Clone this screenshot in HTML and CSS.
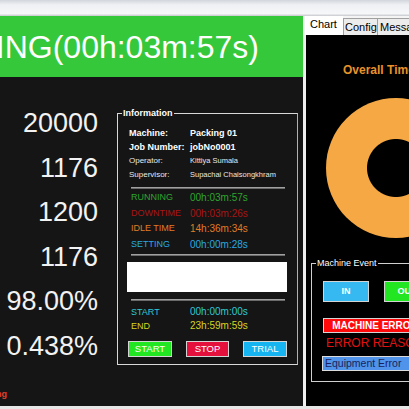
FILE: index.html
```html
<!DOCTYPE html>
<html>
<head>
<meta charset="utf-8">
<link rel="stylesheet" href="styles.css">
</head>
<body>
<div class="app">
  <div class="topstrip"></div>
  <div class="main">
    <div class="left">
      <div class="banner"><span class="banner-text">RUNNING(00h:03m:57s)</span></div>
      <div class="dash">
        <div class="numbers">
          <div class="num">20000</div>
          <div class="num">1176</div>
          <div class="num">1200</div>
          <div class="num">1176</div>
          <div class="num">98.00%</div>
          <div class="num">0.438%</div>
          <div class="warn"><span>Warning</span></div>
        </div>
        <fieldset class="info">
          <legend>Information</legend>
          <div class="details">
            <div class="lbl b">Machine:</div><div class="val b">Packing 01</div>
            <div class="lbl b">Job Number:</div><div class="val b">jobNo0001</div>
            <div class="lbl s">Operator:</div><div class="val xs">Kittiya Sumala</div>
            <div class="lbl s">Supervisor:</div><div class="val xs">Supachai Chaisongkhram</div>
          </div>
          <div class="sep sep1"></div>
          <div class="status">
            <div class="st run">RUNNING</div><div class="sv run">00h:03m:57s</div>
            <div class="st down">DOWNTIME</div><div class="sv down">00h:03m:26s</div>
            <div class="st idle">IDLE TIME</div><div class="sv idle">14h:36m:34s</div>
            <div class="st set">SETTING</div><div class="sv set">00h:00m:28s</div>
          </div>
          <div class="sep sep2"></div>
          <div class="whitebox"></div>
          <div class="sep sep3"></div>
          <div class="shift">
            <div class="st cyan">START</div><div class="sv cyan">00h:00m:00s</div>
            <div class="st yellow">END</div><div class="sv yellow">23h:59m:59s</div>
          </div>
          <div class="actions">
            <div class="abtn start">START</div>
            <div class="abtn stop">STOP</div>
            <div class="abtn trial">TRIAL</div>
          </div>
        </fieldset>
      </div>
    </div>
    <div class="right">
      <div class="tabs">
        <div class="tab active">Chart</div>
        <div class="tab config">Config</div>
        <div class="tab mess">Message</div>
      </div>
      <div class="tabbody">
        <div class="chart-title">Overall Time</div>
        <div class="donut"></div>
        <fieldset class="event">
          <legend>Machine Event</legend>
          <div class="event-row">
            <div class="ebtn in">IN</div>
            <div class="ebtn out">OUT</div>
          </div>
          <div class="ebtn merr">MACHINE ERROR</div>
          <div class="reason">ERROR REASON</div>
          <div class="combo">Equipment Error</div>
        </fieldset>
      </div>
    </div>
  </div>
  <div class="bottomstrip"></div>
</div>
</body>
</html>
```

FILE: styles.css
```css
* { box-sizing: border-box; }
html, body { margin: 0; padding: 0; }
body { font-family: "Liberation Sans", Arial, sans-serif; background: #151515; }
.app { width: 409px; height: 409px; overflow: hidden; display: flex; flex-direction: column; }
.topstrip { height: 16px; flex-shrink: 0; background: linear-gradient(#d2d6dc, #eef0f3 30%, #f6f7f9 85%, #c4c8ce); }
.main { height: 390px; display: flex; flex-shrink: 0; }
.bottomstrip { height: 3px; background: #e6e6e6; flex-shrink: 0; }

.left { width: 303px; display: flex; flex-direction: column; flex-shrink: 0; }
.banner { height: 61px; background: #35c83a; display: flex; align-items: center; justify-content: flex-end; overflow: hidden; padding-right: 44px; flex-shrink: 0; }
.banner-text { color: #fff; font-size: 32px; white-space: nowrap; flex-shrink: 0; line-height: 1; }
.dash { flex: 1; background: #151515; display: flex; }

.numbers { width: 98px; display: flex; flex-direction: column; padding-top: 24px; flex-shrink: 0; }
.num { height: 44.6px; line-height: 44.6px; font-size: 27px; color: #f2f2f2; text-align: right; white-space: nowrap; }
.warn { margin-top: auto; margin-bottom: 7px; width: 7px; overflow: hidden; display: flex; justify-content: flex-end; }
.warn span { color: #e0402a; font-size: 9px; font-weight: bold; flex-shrink: 0; }

.info { margin: 31px 0 0 19px; width: 181px; height: 257px; padding: 0; border: 1px solid #d8d8d8; border-right-color: #b0b0b0; min-width: 0; }
.info legend { color: #fff; font-size: 9px; font-weight: bold; padding: 0 1px; margin-left: 4px; line-height: 10px; }
.details { display: grid; grid-template-columns: 61px 1fr; margin: 8px 0 0 11px; color: #fff; }
.lbl, .val { height: 14px; line-height: 14px; white-space: nowrap; }
.b { font-size: 9px; font-weight: bold; }
.s { font-size: 8px; color: #e8e8e8; }
.xs { font-size: 7.5px; color: #e8e8e8; }
.sep { height: 2px; background: #a0a0a0; border-bottom: 1px solid #6a6a6a; }
.sep1 { margin: 5px 0 1px 13px; width: 154px; }
.status { display: grid; grid-template-columns: 61px 1fr; margin-left: 13px; }
.st, .sv { height: 15.5px; line-height: 15.5px; white-space: nowrap; }
.st { font-size: 9px; }
.sv { font-size: 10px; margin-left: -2px; }
.run { color: #2ea52e; }
.down { color: #a81616; }
.idle { color: #e07c26; }
.set { color: #28a8e2; }
.cyan { color: #2ec8d6; }
.yellow { color: #d8d420; }
.sep2 { margin: 2px 0 0 13px; width: 154px; }
.whitebox { margin: 6px 0 0 9px; width: 160px; height: 30px; background: #fff; }
.sep3 { margin: 7px 0 0 13px; width: 154px; }
.shift { display: grid; grid-template-columns: 61px 1fr; margin: 4px 0 0 13px; }
.shift .st, .shift .sv { height: 14px; line-height: 14px; }
.actions { display: flex; gap: 14px; margin: 8px 0 0 10px; }
.abtn { width: 44px; height: 16px; line-height: 14px; border: 1px solid #d4d4d4; color: #fff; font-size: 9.5px; text-align: center; }
.abtn.stop { width: 43px; }
.start { background: #22e622; }
.stop { background: #e6103c; }
.trial { background: #16b4f0; }

.right { width: 106px; display: flex; flex-direction: column; overflow: hidden; flex-shrink: 0; }
.tabs { height: 19px; display: flex; background: #f4f4f4; flex-shrink: 0; }
.tab { font-size: 11px; color: #000; white-space: nowrap; line-height: 16px; flex-shrink: 0; overflow: hidden; }
.tab.active { width: 40px; background: #fff; padding-left: 5px; line-height: 17px; border-left: 2px solid #f0f0f0; }
.tab.config { width: 35px; margin-top: 2px; height: 17px; background: #ececec; border: 1px solid #a0a0a0; border-bottom: none; padding-left: 1px; }
.tab.mess { width: 40px; margin-top: 2px; height: 17px; background: #ececec; border: 1px solid #a0a0a0; border-left: none; border-bottom: none; padding-left: 2px; }
.tabbody { flex: 1; background: #000; border-left: 3px solid #efefef; display: flex; flex-direction: column; overflow: hidden; }
.chart-title { margin-top: 28px; padding-left: 37px; color: #e8922a; font-size: 12px; font-weight: bold; line-height: 14px; white-space: nowrap; }
.donut { flex-shrink: 0; width: 140px; height: 140px; margin: 21px 0 0 20px; border-radius: 50%; background: radial-gradient(circle, #000 28.5px, #f5a843 29.5px); }
.event { flex-shrink: 0; margin: 20px 0 0 5px; width: 140px; height: 124px; padding: 0 0 0 11px; border: 1px solid #d0d0d0; min-width: 0; }
.event legend { color: #fff; font-size: 9px; padding: 0 1px; margin-left: -7px; line-height: 10px; }
.event-row { display: flex; gap: 15px; margin-top: 13px; }
.ebtn { height: 21px; border: 1px solid #d4d4d4; color: #fff; font-size: 9px; font-weight: bold; text-align: center; line-height: 19px; white-space: nowrap; flex-shrink: 0; }
.in { width: 46px; background: #36b8f0; }
.out { width: 46px; background: #22e622; }
.merr { margin-top: 16px; width: 104px; height: 15px; line-height: 13px; background: #ff0a0a; font-size: 10px; }
.reason { margin: 3px 0 0 3px; color: #e01212; font-size: 12px; line-height: 14px; white-space: nowrap; }
.combo { margin: 6px 0 0 -1px; width: 110px; height: 15px; line-height: 13px; background: #4f93ea; color: #1a1f5e; font-size: 10.5px; padding-left: 2px; border: 1px solid #dcdcdc; white-space: nowrap; }
```
